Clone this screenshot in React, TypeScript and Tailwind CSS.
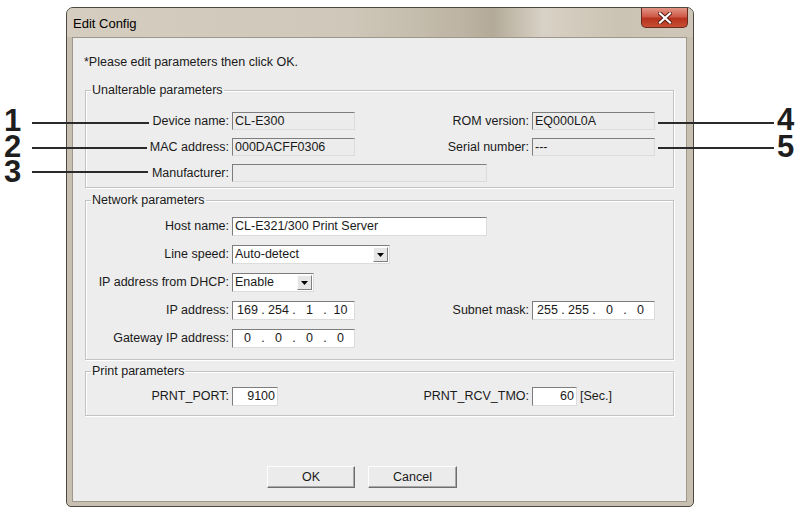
import React from "react";

type BoxProps = { w: string; white?: boolean; right?: boolean; children?: React.ReactNode };

function Box({ w, white, right, children }: BoxProps) {
  return (
    <div
      className={`h-full ${w} flex items-center border border-t-[#7d7d7d] border-l-[#7d7d7d] border-b-[#dcdcdc] border-r-[#dcdcdc] ${
        white ? "bg-white" : "bg-[#ececec]"
      } ${right ? "justify-end pr-[2px]" : "pl-[2px]"} whitespace-nowrap leading-none`}
    >
      {children}
    </div>
  );
}

function Ip({ parts }: { parts: string[] }) {
  return (
    <Box w="w-[123px]" white>
      <div className="flex items-center">
        {parts.map((p, i) => (
          <React.Fragment key={i}>
            <span className="w-[25px] text-center">{p}</span>
            {i < 3 && <span className="w-[6px] text-center">.</span>}
          </React.Fragment>
        ))}
      </div>
    </Box>
  );
}

function Select({ w, value }: { w: string; value: string }) {
  return (
    <div
      className={`h-full ${w} flex border border-t-[#7d7d7d] border-l-[#7d7d7d] border-b-[#dcdcdc] border-r-[#dcdcdc] bg-white`}
    >
      <div className="flex-1 pl-[2px] flex items-center whitespace-nowrap leading-none">{value}</div>
      <div className="w-[15px] my-[1px] mr-[1px] bg-[#e6e6e6] border border-t-[#fbfbfb] border-l-[#fbfbfb] border-b-[#808080] border-r-[#808080] flex items-center justify-center">
        <svg width="7" height="4" viewBox="0 0 7 4">
          <path d="M0 0H7L3.5 4Z" fill="#000" />
        </svg>
      </div>
    </div>
  );
}

function Label({ w, children }: { w: string; children: React.ReactNode }) {
  return <div className={`${w} text-right pr-[3px] whitespace-nowrap leading-none`}>{children}</div>;
}

function Group({ title, children, cls }: { title: string; children: React.ReactNode; cls: string }) {
  return (
    <fieldset
      className={`ml-[12px] w-[589px] border border-[#c3c3c3] shadow-[inset_1px_1px_0_#ffffff,1px_1px_0_#ffffff] ${cls}`}
    >
      <legend className="ml-[5px] px-[1px] leading-[14px] text-[#1a1a1a]">{title}</legend>
      {children}
    </fieldset>
  );
}

function Button({ w, children }: { w: string; children: React.ReactNode }) {
  return (
    <div
      className={`${w} h-[22px] flex items-center justify-center bg-[#ebebeb] border border-t-[#fdfdfd] border-l-[#fdfdfd] border-b-[#6e6e6e] border-r-[#6e6e6e] shadow-[inset_-1px_-1px_0_#a8a8a8] leading-none`}
    >
      {children}
    </div>
  );
}

export default function App() {
  return (
    <div className="relative w-[804px] h-[509px] bg-white overflow-hidden font-['Liberation_Sans',Arial,sans-serif] text-[12.5px] text-[#1a1a1a]">
      {/* window */}
      <div className="absolute left-[66px] top-[7px] w-[628px] h-[500px] rounded-t-[7px] rounded-b-[5px] border border-[#4d4840] bg-[#c7bfaf] flex flex-col">
        <div className="h-[29px] flex items-center justify-between rounded-t-[6px] bg-[linear-gradient(to_right,#d4cdc0_0%,#cfc8ba_45%,#bdb4a3_63%,#b3aa98_68%,#d8d1c5_76%,#cbc3b3_88%,#cec7b9_100%)]">
          <div className="pl-[6px] text-[13px] text-black leading-none mt-[1px]">Edit Config</div>
          <div className="self-start mr-[5px] w-[47px] h-[20px] rounded-b-[5px] border border-t-0 border-[#6a2a20] bg-[linear-gradient(to_bottom,#e39587_0%,#cf5a47_45%,#b8331f_55%,#c64f33_100%)] flex items-center justify-center">
            <svg width="14" height="12" viewBox="0 0 14 12">
              <path
                d="M2 1.5L12 10.5M12 1.5L2 10.5"
                stroke="#5a1a12"
                strokeWidth="4"
                strokeLinecap="square"
              />
              <path d="M2 1.5L12 10.5M12 1.5L2 10.5" stroke="#ffffff" strokeWidth="2.2" strokeLinecap="square" />
            </svg>
          </div>
        </div>
        <div className="ml-[5px] mr-[6px] mb-[4px] flex-1 border border-[#9f978a] bg-[#ededed] flex flex-col">
          <div className="pt-[16px] pl-[11px] leading-[16px]">*Please edit parameters then click OK.</div>

          <Group title="Unalterable parameters" cls="mt-[13px] pb-[5px]">
            <div className="pt-[15px] flex flex-col gap-[8px]">
              <div className="h-[18px] flex items-center">
                <Label w="w-[146px]">Device name:</Label>
                <Box w="w-[123px]">CL-E300</Box>
                <Label w="w-[177px]">ROM version:</Label>
                <Box w="w-[123px]">EQ000L0A</Box>
              </div>
              <div className="h-[18px] flex items-center">
                <Label w="w-[146px]">MAC address:</Label>
                <Box w="w-[123px]">000DACFF0306</Box>
                <Label w="w-[177px]">Serial number:</Label>
                <Box w="w-[123px]">---</Box>
              </div>
              <div className="h-[18px] flex items-center">
                <Label w="w-[146px]">Manufacturer:</Label>
                <Box w="w-[255px]"></Box>
              </div>
            </div>
          </Group>

          <Group title="Network parameters" cls="mt-[5px] pb-[11px]">
            <div className="pt-[10px] flex flex-col gap-[9px]">
              <div className="h-[19px] flex items-center">
                <Label w="w-[146px]">Host name:</Label>
                <Box w="w-[255px]" white>
                  CL-E321/300 Print Server
                </Box>
              </div>
              <div className="h-[19px] flex items-center">
                <Label w="w-[146px]">Line speed:</Label>
                <Select w="w-[158px]" value="Auto-detect" />
              </div>
              <div className="h-[19px] flex items-center">
                <Label w="w-[146px]">IP address from DHCP:</Label>
                <Select w="w-[82px]" value="Enable" />
              </div>
              <div className="h-[19px] flex items-center">
                <Label w="w-[146px]">IP address:</Label>
                <Ip parts={["169", "254", "1", "10"]} />
                <Label w="w-[177px]">Subnet mask:</Label>
                <Ip parts={["255", "255", "0", "0"]} />
              </div>
              <div className="h-[19px] flex items-center">
                <Label w="w-[146px]">Gateway IP address:</Label>
                <Ip parts={["0", "0", "0", "0"]} />
              </div>
            </div>
          </Group>

          <Group title="Print parameters" cls="mt-[4px] pb-[9px]">
            <div className="pt-[9px]">
              <div className="h-[19px] flex items-center">
                <Label w="w-[146px]">PRNT_PORT:</Label>
                <Box w="w-[46px]" white right>
                  9100
                </Box>
                <Label w="w-[254px]">PRNT_RCV_TMO:</Label>
                <Box w="w-[45px]" white right>
                  60
                </Box>
                <div className="pl-[3px] leading-none">[Sec.]</div>
              </div>
            </div>
          </Group>

          <div className="mt-[50px] ml-[194px] flex gap-[13px]">
            <Button w="w-[88px]">OK</Button>
            <Button w="w-[89px]">Cancel</Button>
          </div>
        </div>
      </div>

      {/* annotations */}
      <div className="absolute inset-0 pointer-events-none font-['Liberation_Sans',Arial,sans-serif] text-[#1e1e1e]">
        <div className="absolute left-[4px] top-[110px] text-[31px] font-bold leading-[22px]">1</div>
        <div className="absolute left-[4px] top-[136px] text-[31px] font-bold leading-[22px]">2</div>
        <div className="absolute left-[4px] top-[161px] text-[31px] font-bold leading-[22px]">3</div>
        <div className="absolute left-[777px] top-[109px] text-[31px] font-bold leading-[22px]">4</div>
        <div className="absolute left-[777px] top-[136px] text-[31px] font-bold leading-[22px]">5</div>
        <div className="absolute left-[32px] top-[122px] w-[117px] h-[2px] bg-[#2a2a2a]" />
        <div className="absolute left-[32px] top-[147px] w-[115px] h-[2px] bg-[#2a2a2a]" />
        <div className="absolute left-[32px] top-[171px] w-[116px] h-[2px] bg-[#2a2a2a]" />
        <div className="absolute left-[658px] top-[122px] w-[116px] h-[2px] bg-[#2a2a2a]" />
        <div className="absolute left-[658px] top-[147px] w-[116px] h-[2px] bg-[#2a2a2a]" />
      </div>
    </div>
  );
}
